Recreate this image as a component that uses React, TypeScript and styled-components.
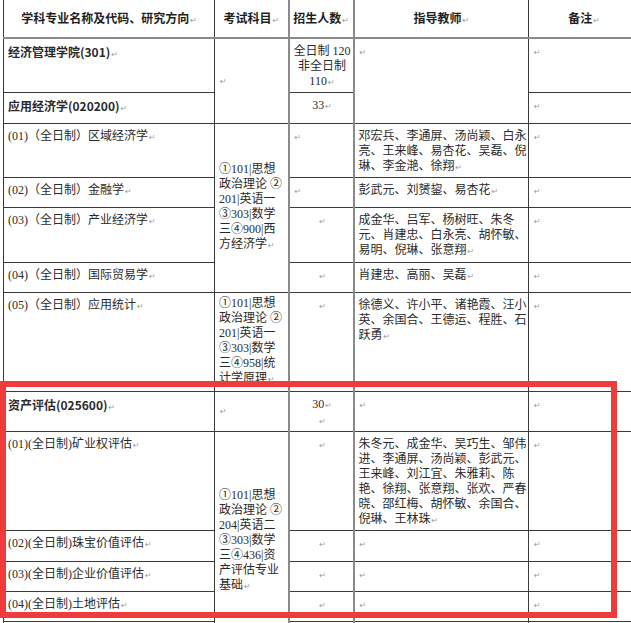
import React from 'react'
import styled, { createGlobalStyle } from 'styled-components'

const GlobalStyle = createGlobalStyle`
  body {
    margin: 0;
    background: #fff;
  }
`

const Page = styled.div`
  position: relative;
  width: 631px;
  height: 623px;
  overflow: hidden;
  background: #fff;
`

const Table = styled.table`
  margin-left: 3px;
  border-collapse: collapse;
  table-layout: fixed;
  width: 636px;
  font-family: 'Liberation Serif', 'Noto Sans CJK SC', serif;
  font-size: 12px;
  line-height: 15px;
  color: #2a2a2a;
`

const Col = styled.col<{ $w: number }>`
  width: ${p => p.$w}px;
`

const Row = styled.tr<{ $h: number }>`
  height: ${p => p.$h}px;
`

const HeadCell = styled.th<{ $edge?: 'thin' | 'thick' }>`
  border-top: none;
  border-bottom: 2px solid #8a8a8a;
  border-left: ${p => (p.$edge === 'thick' ? '2px solid #8a8a8a' : '1px solid #3a3a3a')};
  border-right: 1px solid #3a3a3a;
  padding: 0;
  font-family: 'Noto Sans CJK SC', sans-serif;
  font-size: 12px;
  font-weight: 700;
  color: #1e1e1e;
  text-align: center;
  vertical-align: middle;
  white-space: nowrap;
`

const Cell = styled.td<{
  $align?: 'left' | 'center'
  $middle?: boolean
  $bold?: boolean
  $edge?: 'thin' | 'thick'
}>`
  border: 1px solid #3a3a3a;
  border-left: ${p => (p.$edge === 'thick' ? '2px solid #8a8a8a' : '1px solid #3a3a3a')};
  padding: ${p => (p.$middle ? '0 2px 0 4px' : '5px 2px 0 4px')};
  text-align: ${p => p.$align ?? 'left'};
  vertical-align: ${p => (p.$middle ? 'middle' : 'top')};
  font-weight: ${p => (p.$bold ? 700 : 400)};
  font-family: ${p => (p.$bold ? "'Noto Sans CJK SC', sans-serif" : "'Liberation Serif', 'Noto Sans CJK SC', serif")};
  white-space: nowrap;
  overflow: hidden;
`

const Mark = styled.span`
  font-family: 'DejaVu Sans', sans-serif;
  font-size: 8px;
  font-weight: 400;
  color: #9a9a9a;
  margin-left: 1px;
`

const Highlight = styled.div`
  position: absolute;
  left: 0;
  top: 381px;
  width: 617px;
  height: 237px;
  box-sizing: border-box;
  border: 6px solid #ef3b3b;
  pointer-events: none;
`

const M = () => <Mark>↵</Mark>

const Lines = ({ lines }: { lines: string[] }) => (
  <>
    {lines.map((l, i) => (
      <React.Fragment key={i}>
        {l}
        {i < lines.length - 1 ? <br /> : <M />}
      </React.Fragment>
    ))}
  </>
)

export default function App() {
  return (
    <Page>
      <GlobalStyle />
      <Table>
        <colgroup>
          <Col $w={211} />
          <Col $w={74} />
          <Col $w={65} />
          <Col $w={175} />
          <Col $w={111} />
        </colgroup>
        <tbody>
          <Row $h={38}>
            <HeadCell>学科专业名称及代码、研究方向<M /></HeadCell>
            <HeadCell>考试科目<M /></HeadCell>
            <HeadCell $edge="thick">招生人数<M /></HeadCell>
            <HeadCell $edge="thick">指导教师<M /></HeadCell>
            <HeadCell>备注<M /></HeadCell>
          </Row>

          <Row $h={54}>
            <Cell $bold>经济管理学院(301)<M /></Cell>
            <Cell rowSpan={2} $middle><M /></Cell>
            <Cell $edge="thick" $align="center">
              <Lines lines={['全日制 120', '非全日制', '110']} />
            </Cell>
            <Cell rowSpan={2} $edge="thick"><M /></Cell>
            <Cell><M /></Cell>
          </Row>
          <Row $h={31}>
            <Cell $bold>应用经济学(020200)<M /></Cell>
            <Cell $edge="thick" $align="center">33<M /></Cell>
            <Cell><M /></Cell>
          </Row>

          <Row $h={54}>
            <Cell>(01)（全日制）区域经济学<M /></Cell>
            <Cell rowSpan={4} $middle>
              <Lines lines={['①101|思想', '政治理论 ②', '201|英语一', '③303|数学', '三④900|西', '方经济学']} />
            </Cell>
            <Cell $edge="thick"><M /></Cell>
            <Cell $edge="thick">
              <Lines lines={['邓宏兵、李通屏、汤尚颖、白永', '亮、王来峰、易杏花、吴磊、倪', '琳、李金滟、徐翔']} />
            </Cell>
            <Cell><M /></Cell>
          </Row>
          <Row $h={30}>
            <Cell>(02)（全日制）金融学<M /></Cell>
            <Cell $edge="thick"><M /></Cell>
            <Cell $edge="thick">彭武元、刘赟鋆、易杏花<M /></Cell>
            <Cell><M /></Cell>
          </Row>
          <Row $h={55}>
            <Cell>(03)（全日制）产业经济学<M /></Cell>
            <Cell $edge="thick" $align="center"><M /></Cell>
            <Cell $edge="thick">
              <Lines lines={['成金华、吕军、杨树旺、朱冬', '元、肖建忠、白永亮、胡怀敏、', '易明、倪琳、张意翔']} />
            </Cell>
            <Cell><M /></Cell>
          </Row>
          <Row $h={30}>
            <Cell>(04)（全日制）国际贸易学<M /></Cell>
            <Cell $edge="thick" $align="center"><M /></Cell>
            <Cell $edge="thick">肖建忠、高丽、吴磊<M /></Cell>
            <Cell><M /></Cell>
          </Row>
          <Row $h={99}>
            <Cell>(05)（全日制）应用统计<M /></Cell>
            <Cell $middle>
              <Lines lines={['①101|思想', '政治理论 ②', '201|英语一', '③303|数学', '三④958|统', '计学原理']} />
            </Cell>
            <Cell $edge="thick" $align="center"><M /></Cell>
            <Cell $edge="thick">
              <Lines lines={['徐德义、许小平、诸艳霞、汪小', '英、余国合、王德运、程胜、石', '跃勇']} />
            </Cell>
            <Cell><M /></Cell>
          </Row>

          <Row $h={40}>
            <Cell $bold>资产评估(025600)<M /></Cell>
            <Cell $middle><M /></Cell>
            <Cell $edge="thick" $align="center">
              30<M />
              <br />
              <M />
            </Cell>
            <Cell $edge="thick"><M /></Cell>
            <Cell><M /></Cell>
          </Row>
          <Row $h={99}>
            <Cell>(01)(全日制)矿业权评估<M /></Cell>
            <Cell rowSpan={5} $middle>
              <Lines lines={['①101|思想', '政治理论 ②', '204|英语二', '③303|数学', '三④436|资', '产评估专业', '基础']} />
            </Cell>
            <Cell $edge="thick" $align="center"><M /></Cell>
            <Cell $edge="thick">
              <Lines
                lines={[
                  '朱冬元、成金华、吴巧生、邹伟',
                  '进、李通屏、汤尚颖、彭武元、',
                  '王来峰、刘江宜、朱雅莉、陈',
                  '艳、徐翔、张意翔、张欢、严春',
                  '晓、邵红梅、胡怀敏、余国合、',
                  '倪琳、王林珠',
                ]}
              />
            </Cell>
            <Cell><M /></Cell>
          </Row>
          <Row $h={31}>
            <Cell>(02)(全日制)珠宝价值评估<M /></Cell>
            <Cell $edge="thick" $align="center"><M /></Cell>
            <Cell $edge="thick"><M /></Cell>
            <Cell><M /></Cell>
          </Row>
          <Row $h={30}>
            <Cell>(03)(全日制)企业价值评估<M /></Cell>
            <Cell $edge="thick" $align="center"><M /></Cell>
            <Cell $edge="thick"><M /></Cell>
            <Cell><M /></Cell>
          </Row>
          <Row $h={30}>
            <Cell>(04)(全日制)土地评估<M /></Cell>
            <Cell $edge="thick" $align="center"><M /></Cell>
            <Cell $edge="thick"><M /></Cell>
            <Cell><M /></Cell>
          </Row>
          <Row $h={30}>
            <Cell />
            <Cell $edge="thick" />
            <Cell $edge="thick" />
            <Cell />
          </Row>
        </tbody>
      </Table>
      <Highlight />
    </Page>
  )
}
